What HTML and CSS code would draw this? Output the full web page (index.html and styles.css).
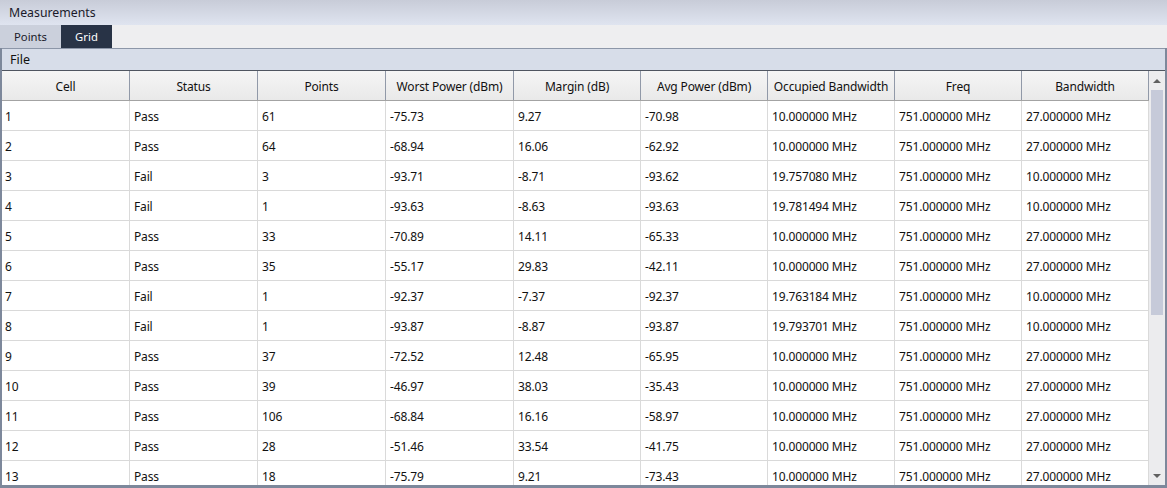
FILE: index.html
```html
<!DOCTYPE html>
<html>
<head>
<meta charset="utf-8">
<link rel="stylesheet" href="styles.css">
</head>
<body>
<div class="titlebar">Measurements</div>
<div class="tabs">
  <div class="tab">Points</div>
  <div class="tab active">Grid</div>
</div>
<div class="panel">
  <div class="filebar">File</div>
  <div class="gridarea">
    <div class="grid">
      <div class="row head">
        <div class="cell">Cell</div><div class="cell">Status</div><div class="cell">Points</div><div class="cell">Worst Power (dBm)</div><div class="cell">Margin (dB)</div><div class="cell">Avg Power (dBm)</div><div class="cell">Occupied Bandwidth</div><div class="cell">Freq</div><div class="cell">Bandwidth</div>
      </div>
      <div class="row"><div class="cell">1</div><div class="cell">Pass</div><div class="cell">61</div><div class="cell">-75.73</div><div class="cell">9.27</div><div class="cell">-70.98</div><div class="cell">10.000000 MHz</div><div class="cell">751.000000 MHz</div><div class="cell">27.000000 MHz</div></div>
      <div class="row"><div class="cell">2</div><div class="cell">Pass</div><div class="cell">64</div><div class="cell">-68.94</div><div class="cell">16.06</div><div class="cell">-62.92</div><div class="cell">10.000000 MHz</div><div class="cell">751.000000 MHz</div><div class="cell">27.000000 MHz</div></div>
      <div class="row"><div class="cell">3</div><div class="cell">Fail</div><div class="cell">3</div><div class="cell">-93.71</div><div class="cell">-8.71</div><div class="cell">-93.62</div><div class="cell">19.757080 MHz</div><div class="cell">751.000000 MHz</div><div class="cell">10.000000 MHz</div></div>
      <div class="row"><div class="cell">4</div><div class="cell">Fail</div><div class="cell">1</div><div class="cell">-93.63</div><div class="cell">-8.63</div><div class="cell">-93.63</div><div class="cell">19.781494 MHz</div><div class="cell">751.000000 MHz</div><div class="cell">10.000000 MHz</div></div>
      <div class="row"><div class="cell">5</div><div class="cell">Pass</div><div class="cell">33</div><div class="cell">-70.89</div><div class="cell">14.11</div><div class="cell">-65.33</div><div class="cell">10.000000 MHz</div><div class="cell">751.000000 MHz</div><div class="cell">27.000000 MHz</div></div>
      <div class="row"><div class="cell">6</div><div class="cell">Pass</div><div class="cell">35</div><div class="cell">-55.17</div><div class="cell">29.83</div><div class="cell">-42.11</div><div class="cell">10.000000 MHz</div><div class="cell">751.000000 MHz</div><div class="cell">27.000000 MHz</div></div>
      <div class="row"><div class="cell">7</div><div class="cell">Fail</div><div class="cell">1</div><div class="cell">-92.37</div><div class="cell">-7.37</div><div class="cell">-92.37</div><div class="cell">19.763184 MHz</div><div class="cell">751.000000 MHz</div><div class="cell">10.000000 MHz</div></div>
      <div class="row"><div class="cell">8</div><div class="cell">Fail</div><div class="cell">1</div><div class="cell">-93.87</div><div class="cell">-8.87</div><div class="cell">-93.87</div><div class="cell">19.793701 MHz</div><div class="cell">751.000000 MHz</div><div class="cell">10.000000 MHz</div></div>
      <div class="row"><div class="cell">9</div><div class="cell">Pass</div><div class="cell">37</div><div class="cell">-72.52</div><div class="cell">12.48</div><div class="cell">-65.95</div><div class="cell">10.000000 MHz</div><div class="cell">751.000000 MHz</div><div class="cell">27.000000 MHz</div></div>
      <div class="row"><div class="cell">10</div><div class="cell">Pass</div><div class="cell">39</div><div class="cell">-46.97</div><div class="cell">38.03</div><div class="cell">-35.43</div><div class="cell">10.000000 MHz</div><div class="cell">751.000000 MHz</div><div class="cell">27.000000 MHz</div></div>
      <div class="row"><div class="cell">11</div><div class="cell">Pass</div><div class="cell">106</div><div class="cell">-68.84</div><div class="cell">16.16</div><div class="cell">-58.97</div><div class="cell">10.000000 MHz</div><div class="cell">751.000000 MHz</div><div class="cell">27.000000 MHz</div></div>
      <div class="row"><div class="cell">12</div><div class="cell">Pass</div><div class="cell">28</div><div class="cell">-51.46</div><div class="cell">33.54</div><div class="cell">-41.75</div><div class="cell">10.000000 MHz</div><div class="cell">751.000000 MHz</div><div class="cell">27.000000 MHz</div></div>
      <div class="row"><div class="cell">13</div><div class="cell">Pass</div><div class="cell">18</div><div class="cell">-75.79</div><div class="cell">9.21</div><div class="cell">-73.43</div><div class="cell">10.000000 MHz</div><div class="cell">751.000000 MHz</div><div class="cell">27.000000 MHz</div></div>
    </div>
    <div class="scrollbar">
      <div class="arrow up"></div>
      <div class="track"><div class="thumb"></div></div>
      <div class="arrow down"></div>
    </div>
  </div>
</div>
</body>
</html>
```

FILE: styles.css
```css
* { box-sizing: border-box; }
html, body { margin: 0; padding: 0; }
body {
  width: 1167px;
  height: 488px;
  overflow: hidden;
  font-family: "Noto Sans", "Open Sans", sans-serif;
  font-size: 12px;
  color: #111111;
  background: #efeff1;
}
.titlebar {
  height: 25px;
  padding-left: 9px;
  font-size: 12.3px;
  line-height: 25px;
  color: #1a1a2a;
  background: linear-gradient(#c8ccd8, #dfe4f0);
}
.tabs {
  display: flex;
  height: 23px;
  background: #eeeef0;
}
.tab {
  width: 61px;
  line-height: 24px;
  text-align: center;
  font-size: 11.3px;
  background: #cbd0dc;
  color: #1a1a2a;
}
.tab.active {
  width: 51px;
  background: #283346;
  color: #ffffff;
}
.panel {
  height: 440px;
  border-left: 2px solid #7d889b;
  border-right: 2px solid #7d889b;
  border-bottom: 3px solid #7d889b;
  display: flex;
  flex-direction: column;
}
.filebar {
  height: 23px;
  border-top: 1px solid #8c96a8;
  border-bottom: 1px solid #4f5560;
  background: #d7dde9;
  padding-left: 8px;
  line-height: 21px;
  font-size: 12.5px;
  color: #111;
}
.gridarea {
  flex: 1;
  display: flex;
  overflow: hidden;
  background: #fff;
}
.grid {
  width: 1147px;
  overflow: hidden;
}
.row {
  display: grid;
  grid-template-columns: 128px 128px 128px 128px 127px 127px 127px 127px 127px;
  height: 30px;
  border-bottom: 1px solid #d9d9d9;
}
.cell {
  border-right: 1px solid #dadada;
  padding-left: 3px;
  line-height: 31px;
  letter-spacing: -0.15px;
  white-space: nowrap;
  overflow: hidden;
}
.row .cell:not(:first-child) { padding-left: 4px; }
.row.head {
  background: linear-gradient(#f5f5f5, #e9e9e9);
  border-bottom: 1px solid #a3a3a3;
}
.row.head .cell {
  text-align: center;
  padding-left: 0;
  line-height: 31px;
  border-right: 1px solid #9199a8;
}
.scrollbar {
  width: 16px;
  background: #ececee;
  display: flex;
  flex-direction: column;
  align-items: center;
}
.arrow {
  height: 19px;
  width: 16px;
  display: flex;
  align-items: center;
  justify-content: center;
}
.arrow.up::before {
  content: "";
  border-left: 4px solid transparent;
  border-right: 4px solid transparent;
  border-bottom: 4px solid #606060;
}
.arrow.down::before {
  content: "";
  border-left: 4px solid transparent;
  border-right: 4px solid transparent;
  border-top: 4px solid #606060;
}
.track {
  flex: 1;
  width: 16px;
  padding: 0 2px 0 2px;
}
.thumb {
  width: 12px;
  height: 225px;
  background: #c6cad9;
}
```
